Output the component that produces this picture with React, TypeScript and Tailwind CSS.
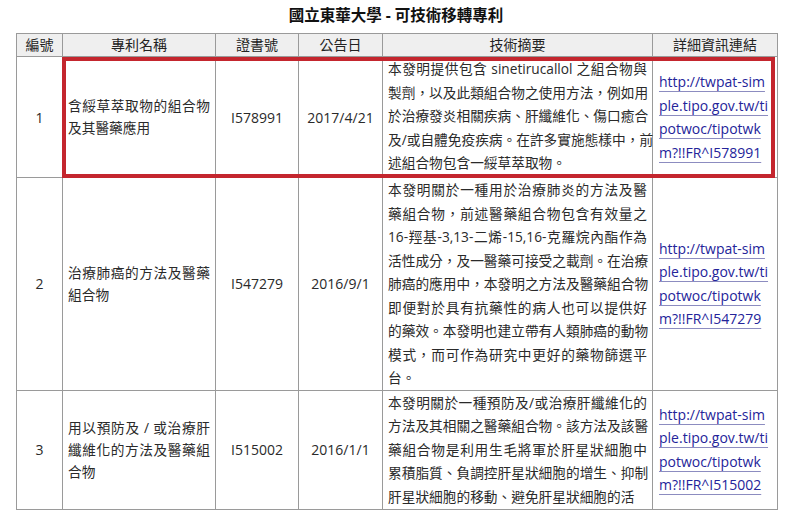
import React from 'react';

const patents = [
  {
    no: '1',
    name: ['含綏草萃取物的組合物', '及其醫藥應用'],
    cert: 'I578991',
    date: '2017/4/21',
    summary: [
      '本發明提供包含 sinetirucallol 之組合物與',
      '製劑，以及此類組合物之使用方法，例如用',
      '於治療發炎相關疾病、肝纖維化、傷口癒合',
      '及/或自體免疫疾病。在許多實施態樣中，前',
      '述組合物包含一綏草萃取物。',
    ],
    link: ['http://twpat-sim', 'ple.tipo.gov.tw/ti', 'potwoc/tipotwk', 'm?!!FR^I578991'],
    height: 'h-[121px]',
  },
  {
    no: '2',
    name: ['治療肺癌的方法及醫藥', '組合物'],
    cert: 'I547279',
    date: '2016/9/1',
    summary: [
      '本發明關於一種用於治療肺炎的方法及醫',
      '藥組合物，前述醫藥組合物包含有效量之',
      '16-羥基-3,13-二烯-15,16-克羅烷內酯作為',
      '活性成分，及一醫藥可接受之載劑。在治療',
      '肺癌的應用中，本發明之方法及醫藥組合物',
      '即便對於具有抗藥性的病人也可以提供好',
      '的藥效。本發明也建立帶有人類肺癌的動物',
      '模式，而可作為研究中更好的藥物篩選平',
      '台。',
    ],
    link: ['http://twpat-sim', 'ple.tipo.gov.tw/ti', 'potwoc/tipotwk', 'm?!!FR^I547279'],
    height: 'h-[212px]',
  },
  {
    no: '3',
    name: ['用以預防及 / 或治療肝', '纖維化的方法及醫藥組', '合物'],
    cert: 'I515002',
    date: '2016/1/1',
    summary: [
      '本發明關於一種預防及/或治療肝纖維化的',
      '方法及其相關之醫藥組合物。該方法及該醫',
      '藥組合物是利用生毛將軍於肝星狀細胞中',
      '累積脂質、負調控肝星狀細胞的增生、抑制',
      '肝星狀細胞的移動、避免肝星狀細胞的活',
    ],
    link: ['http://twpat-sim', 'ple.tipo.gov.tw/ti', 'potwoc/tipotwk', 'm?!!FR^I515002'],
    height: 'h-[119px]',
  },
];

const headers = ['編號', '專利名稱', '證書號', '公告日', '技術摘要', '詳細資訊連結'];

// justify every line but the last one of a block
function Lines({ lines }: { lines: string[] }) {
  return (
    <>
      {lines.map((l, i) => (
        <div key={i} className={i < lines.length - 1 ? 'text-justify [text-align-last:justify]' : ''}>
          {l}
        </div>
      ))}
    </>
  );
}

export default function App() {
  return (
    <div className="w-[792px] h-[518px] overflow-hidden bg-white text-[#2a2a2a] font-['Open_Sans','Noto_Sans_CJK_TC',sans-serif]">
      <h1 className="pt-[5px] h-[33px] text-center text-[15.5px] leading-[20px] font-bold text-[#111]">
        國立東華大學 - 可技術移轉專利
      </h1>

      <div className="relative ml-[16px] w-[761px]">
        <table className="w-[761px] table-fixed border-collapse text-[13.7px]">
          <colgroup>
            <col className="w-[46px]" />
            <col className="w-[153px]" />
            <col className="w-[83px]" />
            <col className="w-[84px]" />
            <col className="w-[270px]" />
            <col className="w-[125px]" />
          </colgroup>
          <thead>
            <tr className="h-[23px] bg-[#efefef]">
              {headers.map((h) => (
                <th key={h} className="border border-[#9a9a9a] p-0 text-center font-normal text-[14px] leading-[22px] text-[#222]">
                  {h}
                </th>
              ))}
            </tr>
          </thead>
          <tbody>
            {patents.map((p) => (
              <tr key={p.no} className={p.height}>
                <td className="border border-[#9a9a9a] p-0 text-center text-[14px]">{p.no}</td>
                <td className="border border-[#9a9a9a] px-[5px] py-0 leading-[22px] whitespace-nowrap">
                  <Lines lines={p.name} />
                </td>
                <td className="border border-[#9a9a9a] p-0 text-center text-[14px]">{p.cert}</td>
                <td className="border border-[#9a9a9a] p-0 text-center text-[14px]">{p.date}</td>
                <td className="border border-[#9a9a9a] px-[5px] py-0 align-top leading-[23.5px] whitespace-nowrap">
                  <Lines lines={p.summary} />
                </td>
                <td className="border border-[#9a9a9a] pl-[6px] pr-0 py-0 text-[14px] leading-[23.5px] whitespace-nowrap">
                  {p.link.map((l, i) => (
                    <div key={i}>
                      <span className="text-[#24249a] underline decoration-[#8c8cc0] underline-offset-[4px]">{l}</span>
                    </div>
                  ))}
                </td>
              </tr>
            ))}
          </tbody>
        </table>

        {/* highlight around row 1 */}
        <div className="absolute left-[46px] top-[24px] w-[713px] h-[121px] border-[4px] border-[#c4262e] pointer-events-none" />
      </div>
    </div>
  );
}
